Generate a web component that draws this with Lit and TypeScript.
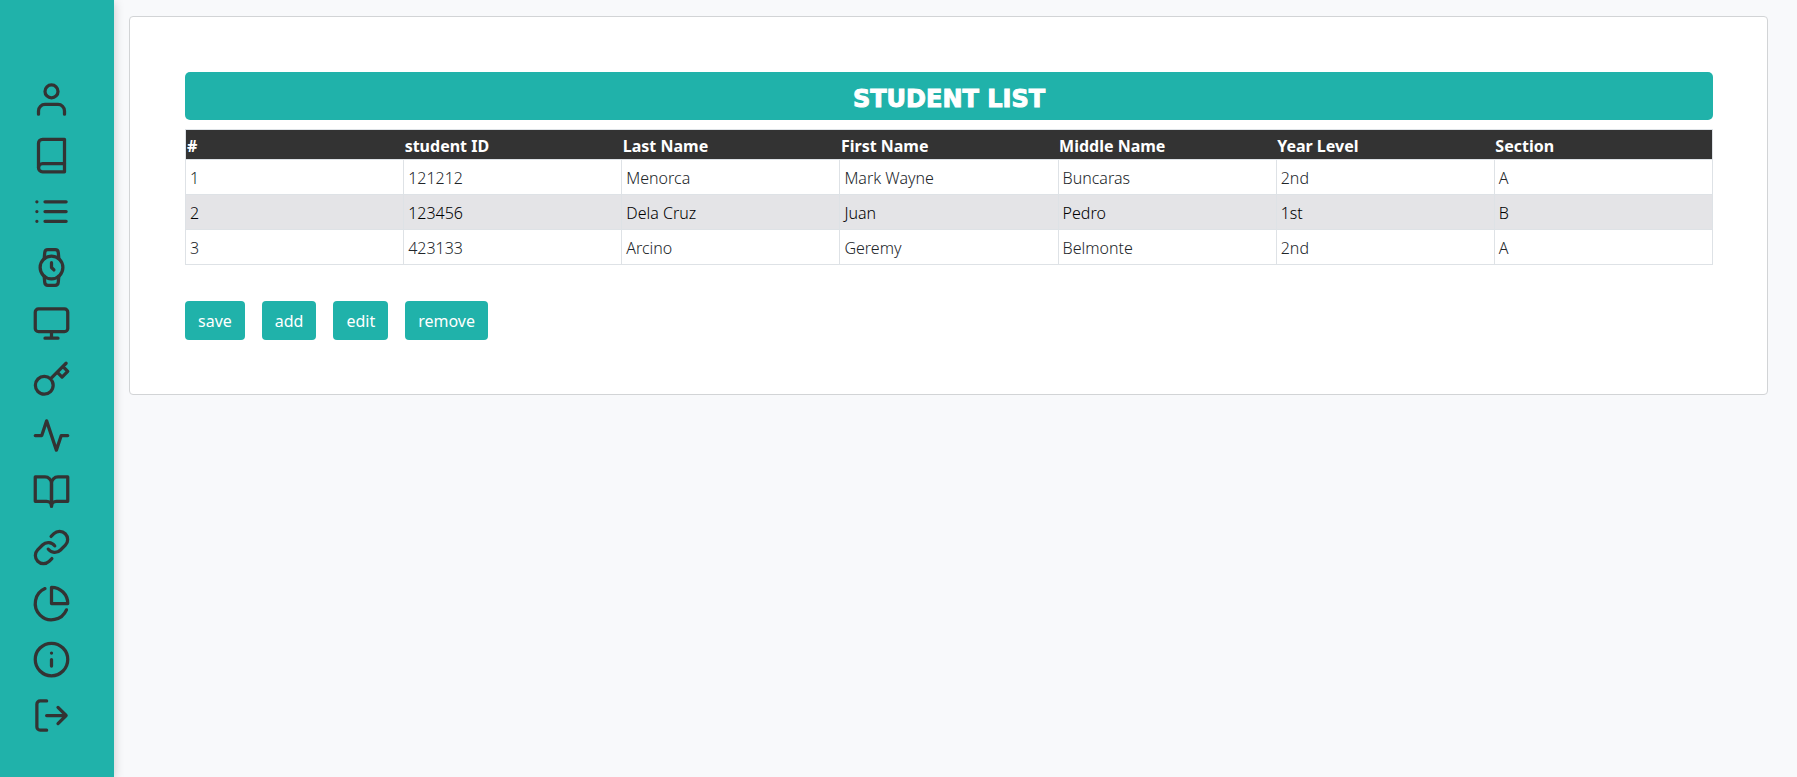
import { LitElement, html, css, svg } from "lit";
import { customElement } from "lit/decorators.js";

const icons = [
  { name: "Profile", shape: svg`<path d="M20 21v-2a4 4 0 0 0-4-4H8a4 4 0 0 0-4 4v2"/><circle cx="12" cy="7" r="4"/>` },
  { name: "Subjects", shape: svg`<path d="M4 19.5A2.5 2.5 0 0 1 6.5 17H20"/><path d="M6.500 2H20v20H6.500A2.500 2.500 0 0 1 4 19.500v-15A2.500 2.500 0 0 1 6.500 2z"/>` },
  { name: "Lists", shape: svg`<path d="M8 6h13M8 12h13M8 18h13M3 6h.01M3 12h.01M3 18h.01"/>` },
  { name: "Schedule", shape: svg`<circle cx="12" cy="12" r="7"/><path d="M12 9v3l1.500 1.500"/><path d="M16.510 17.350l-.350 3.830a2 2 0 0 1-2 1.820H9.830a2 2 0 0 1-2-1.820l-.350-3.830m.010-10.700l.350-3.830A2 2 0 0 1 9.830 1h4.350a2 2 0 0 1 2 1.820l.350 3.830"/>` },
  { name: "Monitor", shape: svg`<rect x="2" y="3" width="20" height="14" rx="2"/><path d="M8 21h8M12 17v4"/>` },
  { name: "Access", shape: svg`<path d="M21 2l-2 2m-7.610 7.610a5.500 5.500 0 1 1-7.778 7.778 5.500 5.500 0 0 1 7.777-7.777zm0 0L15.500 7.500m0 0l3 3L22 7l-3-3m-3.500 3.500L19 4"/>` },
  { name: "Activity", shape: svg`<path d="M22 12h-4l-3 9L9 3l-3 9H2"/>` },
  { name: "Library", shape: svg`<path d="M2 3h6a4 4 0 0 1 4 4v14a3 3 0 0 0-3-3H2z"/><path d="M22 3h-6a4 4 0 0 0-4 4v14a3 3 0 0 1 3-3h7z"/>` },
  { name: "Links", shape: svg`<path d="M10 13a5 5 0 0 0 7.540.540l3-3a5 5 0 0 0-7.070-7.070l-1.720 1.710"/><path d="M14 11a5 5 0 0 0-7.540-.540l-3 3a5 5 0 0 0 7.070 7.070l1.710-1.710"/>` },
  { name: "Reports", shape: svg`<path d="M21.210 15.890A10 10 0 1 1 8 2.830"/><path d="M22 12A10 10 0 0 0 12 2v10z"/>` },
  { name: "About", shape: svg`<circle cx="12" cy="12" r="10"/><path d="M12 16v-4M12 8h.01"/>` },
  { name: "Log out", shape: svg`<path d="M9 21H5a2 2 0 0 1-2-2V5a2 2 0 0 1 2-2h4"/><path d="M16 17l5-5-5-5M21 12H9"/>` },
];

const columns = ["#", "student ID", "Last Name", "First Name", "Middle Name", "Year Level", "Section"];

const students = [
  ["1", "121212", "Menorca", "Mark Wayne", "Buncaras", "2nd", "A"],
  ["2", "123456", "Dela Cruz", "Juan", "Pedro", "1st", "B"],
  ["3", "423133", "Arcino", "Geremy", "Belmonte", "2nd", "A"],
];

@customElement("side-nav")
class SideNav extends LitElement {
  static styles = css`
    :host {
      display: block;
      flex: none;
      box-sizing: border-box;
      width: 114px;
      padding: 80px 32px 0;
      background: #20b2aa;
      box-shadow: 0 2px 10px rgba(0, 0, 0, 0.2);
    }
    .links {
      display: flex;
      flex-direction: column;
      gap: 17px;
    }
    .link {
      display: block;
      width: 39px;
      height: 39px;
      color: #333;
    }
    .icon {
      display: block;
      width: 100%;
      height: 100%;
      fill: none;
      stroke: currentColor;
      stroke-width: 2;
      stroke-linecap: round;
      stroke-linejoin: round;
    }
  `;

  render() {
    return html`<nav class="links">
      ${icons.map(
        (icon) => html`<a class="link" href="#" aria-label=${icon.name}>
          <svg class="icon" viewBox="0 0 24 24" aria-hidden="true">${icon.shape}</svg>
        </a>`
      )}
    </nav>`;
  }
}

@customElement("app-root")
class AppRoot extends LitElement {
  static styles = css`
    :host {
      display: flex;
      min-height: 100vh;
      background: #f8f9fb;
      font-family: "Segoe UI", "Noto Sans", sans-serif;
      font-size: 16px;
      line-height: 25px;
      color: #212529;
    }
    .main {
      flex: 1;
      min-width: 0;
      padding: 16px 29px 16px 15px;
    }
    .card {
      padding: 55px 54px 54px 55px;
      background: #fff;
      border: 1px solid #d2d4d6;
      border-radius: 4px;
    }
    .title {
      margin: 0 0 9px;
      padding: 9px 0 3px;
      border-radius: 5px;
      background: #20b2aa;
      color: #fff;
      font-family: "Arial Black", "DejaVu Sans", sans-serif;
      font-size: 24px;
      font-weight: 900;
      line-height: 36px;
      text-align: center;
      text-transform: uppercase;
      -webkit-text-stroke: 1px #fff;
    }
    .students {
      width: 100%;
      table-layout: fixed;
      border-collapse: collapse;
      border: 1px solid #dee2e6;
    }
    .head {
      padding: 4px 1px 0;
      background: #333;
      color: #fff;
      font-weight: 700;
      text-align: left;
    }
    .cell {
      padding: 6px 4px 4px;
      border: 1px solid #dee2e6;
      font-weight: 300;
      line-height: 24px;
    }
    .row:nth-child(even) {
      background: #e4e4e7;
      color: #000;
    }
    .actions {
      display: flex;
      gap: 17px;
      margin-top: 36px;
    }
    .button {
      padding: 8px 13px 6px;
      border: 0;
      border-radius: 4px;
      background: #20b2aa;
      color: #fff;
      font: inherit;
    }
  `;

  render() {
    return html`
      <side-nav></side-nav>
      <main class="main">
        <section class="card">
          <h1 class="title">Student List</h1>
          <table class="students">
            <thead>
              <tr>${columns.map((name) => html`<th class="head" scope="col">${name}</th>`)}</tr>
            </thead>
            <tbody>
              ${students.map(
                (student) => html`<tr class="row">${student.map((value) => html`<td class="cell">${value}</td>`)}</tr>`
              )}
            </tbody>
          </table>
          <div class="actions">
            ${["save", "add", "edit", "remove"].map(
              (label) => html`<button class="button" type="button">${label}</button>`
            )}
          </div>
        </section>
      </main>
    `;
  }
}
